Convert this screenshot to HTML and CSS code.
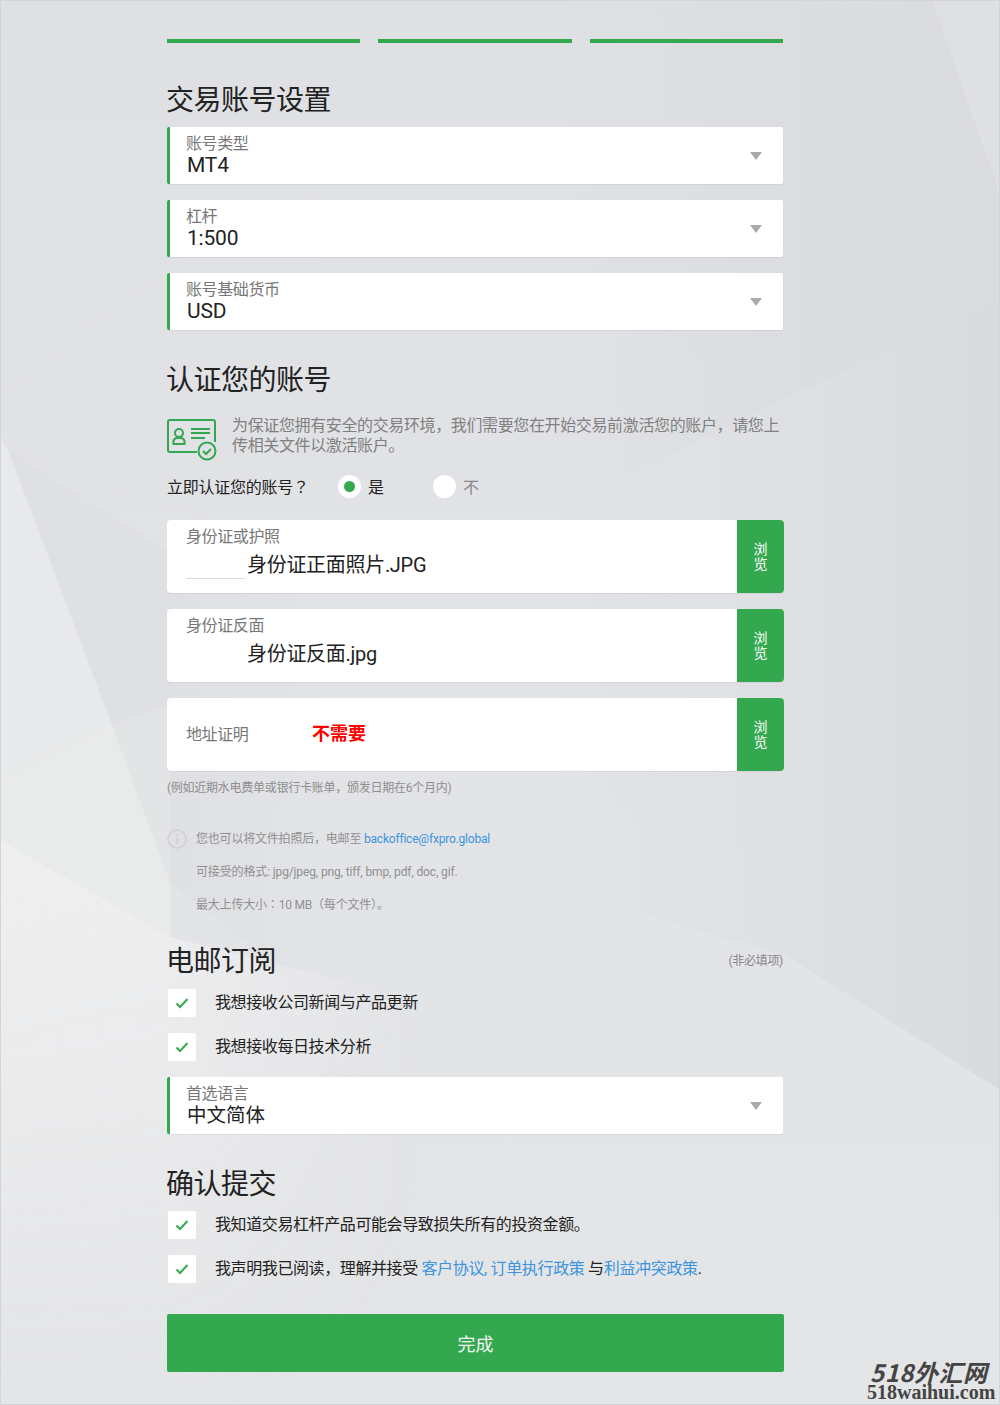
FILE: index.html
```html
<!DOCTYPE html>
<html lang="zh">
<head>
<meta charset="utf-8">
<title>交易账号设置</title>
<link rel="stylesheet" href="styles.css">
</head>
<body>
<svg class="bg" viewBox="0 0 1000 1405" preserveAspectRatio="none" aria-hidden="true">
  <defs>
    <linearGradient id="base" x1="0" y1="0" x2="0" y2="1">
      <stop offset="0" stop-color="#dfe0e3"/>
      <stop offset="0.45" stop-color="#e2e3e6"/>
      <stop offset="1" stop-color="#e4e5e7"/>
    </linearGradient>
    <linearGradient id="rtop" gradientUnits="userSpaceOnUse" x1="560" y1="0" x2="1000" y2="0">
      <stop offset="0" stop-color="#dbdde0" stop-opacity="0"/>
      <stop offset="0.5" stop-color="#dbdde0"/>
      <stop offset="1" stop-color="#d9dbde"/>
    </linearGradient>
    <linearGradient id="rmid" gradientUnits="userSpaceOnUse" x1="560" y1="0" x2="1000" y2="0">
      <stop offset="0" stop-color="#dfe0e4" stop-opacity="0"/>
      <stop offset="0.5" stop-color="#dfe0e4"/>
      <stop offset="1" stop-color="#d9dadd"/>
    </linearGradient>
    <linearGradient id="fadeDark" gradientUnits="userSpaceOnUse" x1="170" y1="0" x2="320" y2="0">
      <stop offset="0" stop-color="#dfe0e3"/>
      <stop offset="1" stop-color="#dfe0e3" stop-opacity="0"/>
    </linearGradient>
    <linearGradient id="fadeGlow" gradientUnits="userSpaceOnUse" x1="0" y1="0" x2="420" y2="0">
      <stop offset="0" stop-color="#f2f3f3" stop-opacity="0.75"/>
      <stop offset="0.4" stop-color="#f2f3f3" stop-opacity="0.7"/>
      <stop offset="1" stop-color="#f2f3f3" stop-opacity="0"/>
    </linearGradient>
    <linearGradient id="vfade" gradientUnits="userSpaceOnUse" x1="0" y1="840" x2="0" y2="1405">
      <stop offset="0" stop-color="#fff"/>
      <stop offset="0.4" stop-color="#aaa"/>
      <stop offset="1" stop-color="#000"/>
    </linearGradient>
    <mask id="glowMask" maskUnits="userSpaceOnUse" x="0" y="0" width="1000" height="1405">
      <rect width="1000" height="1405" fill="url(#vfade)"/>
    </mask>
  </defs>
  <rect width="1000" height="1405" fill="url(#base)"/>
  <polygon points="0,400 165,265 320,190 320,560 8,450 0,435" fill="#e1e2e5" opacity="0.6"/>
  <polygon points="560,0 1000,0 1000,300 785,399 560,509" fill="url(#rtop)"/>
  <polygon points="560,509 785,399 1000,300 1000,1090 785,955 560,890" fill="url(#rmid)"/>
  <polygon points="932,0 1000,0 1000,195" fill="#dfe0e3"/>
  <polygon points="8,450 170,553 320,600 320,1000 170,882" fill="url(#fadeDark)"/>
  <polygon points="8,450 170,553 170,882" fill="#dfe0e3"/>
  <polygon points="112,725 170,705 170,882" fill="#e3e4e6"/>
  <polygon points="0,435 8,450 112,725 0,779" fill="#e8e9eb"/>
  <polygon points="0,779 112,725 170,882 170,937 0,840" fill="#e9ebeb"/>
  <polygon points="0,840 170,937 420,1000 420,1405 0,1405" fill="url(#fadeGlow)" mask="url(#glowMask)"/>
  <rect x="0.500" y="0.500" width="999" height="1404" fill="none" stroke="#d2d4d5"/>
</svg>
<main class="page">
  <div class="steps"><span></span><span></span><span></span></div>

  <h2 class="title first">交易账号设置</h2>
  <div class="select"><div class="sel-text"><label>账号类型</label><strong>MT4</strong></div><i class="caret"></i></div>
  <div class="select"><div class="sel-text"><label>杠杆</label><strong>1:500</strong></div><i class="caret"></i></div>
  <div class="select"><div class="sel-text"><label>账号基础货币</label><strong>USD</strong></div><i class="caret"></i></div>

  <h2 class="title verify">认证您的账号</h2>
  <div class="intro">
    <svg class="id-icon" width="50" height="42" viewBox="0 0 50 42" fill="none" stroke="#34a84f" stroke-width="2">
      <path d="M30 33H3a2 2 0 0 1-2-2V3a2 2 0 0 1 2-2h43a2 2 0 0 1 2 2v20"/>
      <circle cx="12" cy="14" r="4"/>
      <path d="M6.500 25v-3a4 4 0 0 1 4-3h3a4 4 0 0 1 4 3v3z"/>
      <path d="M24 10h19M24 14h19M24 19h14"/>
      <circle cx="40" cy="32" r="8.500" fill="#e1e2e5"/>
      <path d="M36 32l3 3 5-5"/>
    </svg>
    <p>为保证您拥有安全的交易环境，我们需要您在开始交易前激活您的账户，请您上传相关文件以激活账户。</p>
  </div>
  <div class="question">
    <span class="q-label">立即认证您的账号<span class="pn" lang="zh-TW">？</span></span>
    <span class="radio on"></span><span class="r-text">是</span>
    <span class="radio"></span><span class="r-text muted">不</span>
  </div>

  <div class="upload"><div class="up-body"><label>身份证或护照</label><div class="file"><span class="blank line"></span>身份证正面照片.JPG</div></div><button class="browse">浏<br>览</button></div>
  <div class="upload"><div class="up-body"><label>身份证反面</label><div class="file"><span class="blank"></span>身份证反面.jpg</div></div><button class="browse">浏<br>览</button></div>
  <div class="upload"><div class="up-body row"><label>地址证明</label><b class="none">不需要</b></div><button class="browse">浏<br>览</button></div>

  <p class="hint">(例如近期水电费单或银行卡账单，颁发日期在6个月内)</p>
  <div class="info">
    <svg class="info-icon" width="20" height="20" viewBox="0 0 20 20" fill="none" stroke="#cfd0d2" stroke-width="1.6"><circle cx="10" cy="10" r="9"/><path d="M10 9v6M10 5v2"/></svg>
    <p>您也可以将文件拍照后，电邮至 <a href="#">backoffice@fxpro.global</a></p>
    <p class="latin">可接受的格式: jpg/jpeg, png, tiff, bmp, pdf, doc, gif.</p>
    <p>最大上传大小<span class="pn" lang="zh-TW">：</span>10 MB<span class="pn" lang="zh-TW">（</span>每个文件<span class="pn" lang="zh-TW">）</span>。</p>
  </div>

  <div class="title-row"><h2 class="title">电邮订阅</h2><small>(非必填项)</small></div>
  <div class="check"><span class="box"><svg width="14" height="12" viewBox="0 0 14 12" fill="none" stroke="#34a84f" stroke-width="2"><path d="M1.500 6.500l3.500 3.500 7.500-8"/></svg></span>我想接收公司新闻与产品更新</div>
  <div class="check"><span class="box"><svg width="14" height="12" viewBox="0 0 14 12" fill="none" stroke="#34a84f" stroke-width="2"><path d="M1.500 6.500l3.500 3.500 7.500-8"/></svg></span>我想接收每日技术分析</div>
  <div class="select lang"><div class="sel-text"><label>首选语言</label><strong>中文简体</strong></div><i class="caret"></i></div>

  <h2 class="title confirm">确认提交</h2>
  <div class="check"><span class="box"><svg width="14" height="12" viewBox="0 0 14 12" fill="none" stroke="#34a84f" stroke-width="2"><path d="M1.500 6.500l3.500 3.500 7.500-8"/></svg></span>我知道交易杠杆产品可能会导致损失所有的投资金额。</div>
  <div class="check"><span class="box"><svg width="14" height="12" viewBox="0 0 14 12" fill="none" stroke="#34a84f" stroke-width="2"><path d="M1.500 6.500l3.500 3.500 7.500-8"/></svg></span><span>我声明我已阅读，理解并接受 <a href="#">客户协议</a><a href="#">, 订单执行政策</a> 与<a href="#">利益冲突政策</a>.</span></div>
  <button class="submit">完成</button>
</main>
<div class="mark"><span class="mark-top">518外汇网</span><span class="mark-url">518waihui.com</span></div>
</body>
</html>
```
FILE: styles.css
```css
* { box-sizing: border-box; }
html, body { margin: 0; padding: 0; }
body {
  position: relative;
  width: 1000px;
  height: 1405px;
  overflow: hidden;
  font-family: Roboto, "Noto Sans CJK SC", sans-serif;
  color: #222;
  background: #e1e2e5;
}
.pn { font-family: "Noto Sans CJK TC", sans-serif; line-height: 0; }
.bg { position: absolute; left: 0; top: 0; width: 1000px; height: 1405px; }
.page {
  position: relative;
  width: 617px;
  margin-left: 167px;
  padding-top: 39px;
}
.steps { display: flex; gap: 18px; width: 616px; }
.steps span { flex: 1; height: 4px; background: #34a84f; }
.title { margin: 0 0 0 -1px; font-size: 28px; line-height: 40px; font-weight: 400; color: #222; letter-spacing: -0.5px; }
.title.first { margin-top: 38px; margin-bottom: 6px; }
.title.verify { margin-top: 31px; margin-bottom: 15px; }
.title.confirm { margin-top: 31px; margin-bottom: 6px; }
.select {
  display: flex;
  align-items: center;
  justify-content: space-between;
  width: 616px;
  height: 57px;
  margin-bottom: 16px;
  padding: 0 21px 0 16px;
  background: #fff;
  border-left: 3px solid #34a84f;
  border-radius: 2px;
  box-shadow: 0 1px 1px rgba(0,0,0,.06);
}
.sel-text { display: flex; flex-direction: column; }
label { font-size: 16px; line-height: 20px; color: #777; letter-spacing: -0.4px; }
.sel-text strong { margin-left: 1px; margin-bottom: 2px; font-size: 21px; line-height: 22px; font-weight: 400; color: #222; letter-spacing: -0.2px; }
.lang .sel-text strong { font-size: 19.5px; line-height: 24px; margin-bottom: 0; letter-spacing: 0; }
.caret { width: 0; height: 0; border-left: 6px solid transparent; border-right: 6px solid transparent; border-top: 8px solid #aaa; }
.intro { display: flex; height: 45px; align-items: flex-start; }
.id-icon { flex: none; margin-top: 3px; }
.intro p { margin: 0 0 0 15px; width: 552px; font-size: 16px; line-height: 20px; color: #808080; letter-spacing: -0.37px; }
.question { display: flex; align-items: center; height: 28px; margin-top: 11px; margin-bottom: 20px; font-size: 16px; letter-spacing: -0.25px; }
.q-label { width: 171px; color: #222; }
.radio { position: relative; width: 23px; height: 23px; border-radius: 50%; background: #fff; }
.radio.on::after { content: ""; position: absolute; left: 6px; top: 6px; width: 11px; height: 11px; border-radius: 50%; background: #34a84f; }
.r-text { width: 65px; margin-left: 7px; color: #222; }
.r-text.muted { color: #888; }
.upload {
  display: flex;
  width: 617px;
  height: 73px;
  margin-bottom: 16px;
  border-radius: 4px;
  overflow: hidden;
  background: #fff;
  box-shadow: 0 1px 1px rgba(0,0,0,.06);
}
.up-body { flex: 1; padding: 7px 0 0 19px; }
.up-body label { display: block; }
.up-body.row { display: flex; align-items: center; padding-top: 0; }
.up-body.row label { width: 126px; }
.file { display: flex; align-items: flex-end; margin-top: 6px; height: 24px; font-size: 20px; line-height: 24px; color: #222; letter-spacing: -0.3px; }
.blank { display: block; width: 61px; height: 27px; flex: none; }
.blank.line { border-bottom: 1px solid #ddd; height: 25px; margin-bottom: -2px; margin-right: 2px; width: 59px; }
.none { color: #f00; font-size: 18px; font-weight: 700; margin-top: -5px; }
.browse {
  flex: none;
  width: 47px;
  border: 0;
  padding: 0 0 2px;
  background: #34a84f;
  color: #fff;
  font: 14px/15px "Noto Sans CJK SC", sans-serif;
}
.hint { margin: -8px 0 0; font-size: 12px; line-height: 18px; color: #8e8e8e; letter-spacing: -0.25px; }
.info { position: relative; margin-top: 33px; padding-left: 29px; height: 100px; }
.info-icon { position: absolute; left: 0; top: -1px; }
.info p { margin: 0 0 15px; font-size: 12px; line-height: 18px; color: #909090; letter-spacing: -0.2px; }
.info p.latin { letter-spacing: -0.13px; }
a { color: #3d94dd; text-decoration: none; }
.title-row { display: flex; justify-content: space-between; align-items: center; width: 616px; margin-top: 12px; margin-bottom: 7px; }
.title-row small { padding-bottom: 6px; font-size: 12px; color: #888; letter-spacing: -0.3px; }
.check { display: flex; align-items: center; height: 28px; padding-bottom: 4px; margin-bottom: 16px; font-size: 16px; letter-spacing: -0.4px; color: #222; }
.check a { letter-spacing: -0.33px; }
.box { display: flex; align-items: center; justify-content: center; align-self: flex-start; width: 28px; height: 28px; margin-left: 1px; margin-right: 19px; background: #fff; border-radius: 2px; flex: none; }
.select.lang { margin-bottom: 0; }
.submit {
  display: block;
  width: 617px;
  height: 58px;
  margin-top: 31px;
  border: 0;
  border-radius: 2px;
  background: #34a84f;
  color: #f4f4f4;
  font: 18px "Noto Sans CJK SC", sans-serif;
}
.mark { position: absolute; left: 867px; top: 1359px; display: flex; flex-direction: column; color: #444; }
.mark-top { font: italic 700 24px/26px "Noto Sans CJK SC", sans-serif; letter-spacing: 0.5px; margin-left: 3px; }
.mark-url { font: 700 20px/15px "Liberation Serif", serif; }
```
